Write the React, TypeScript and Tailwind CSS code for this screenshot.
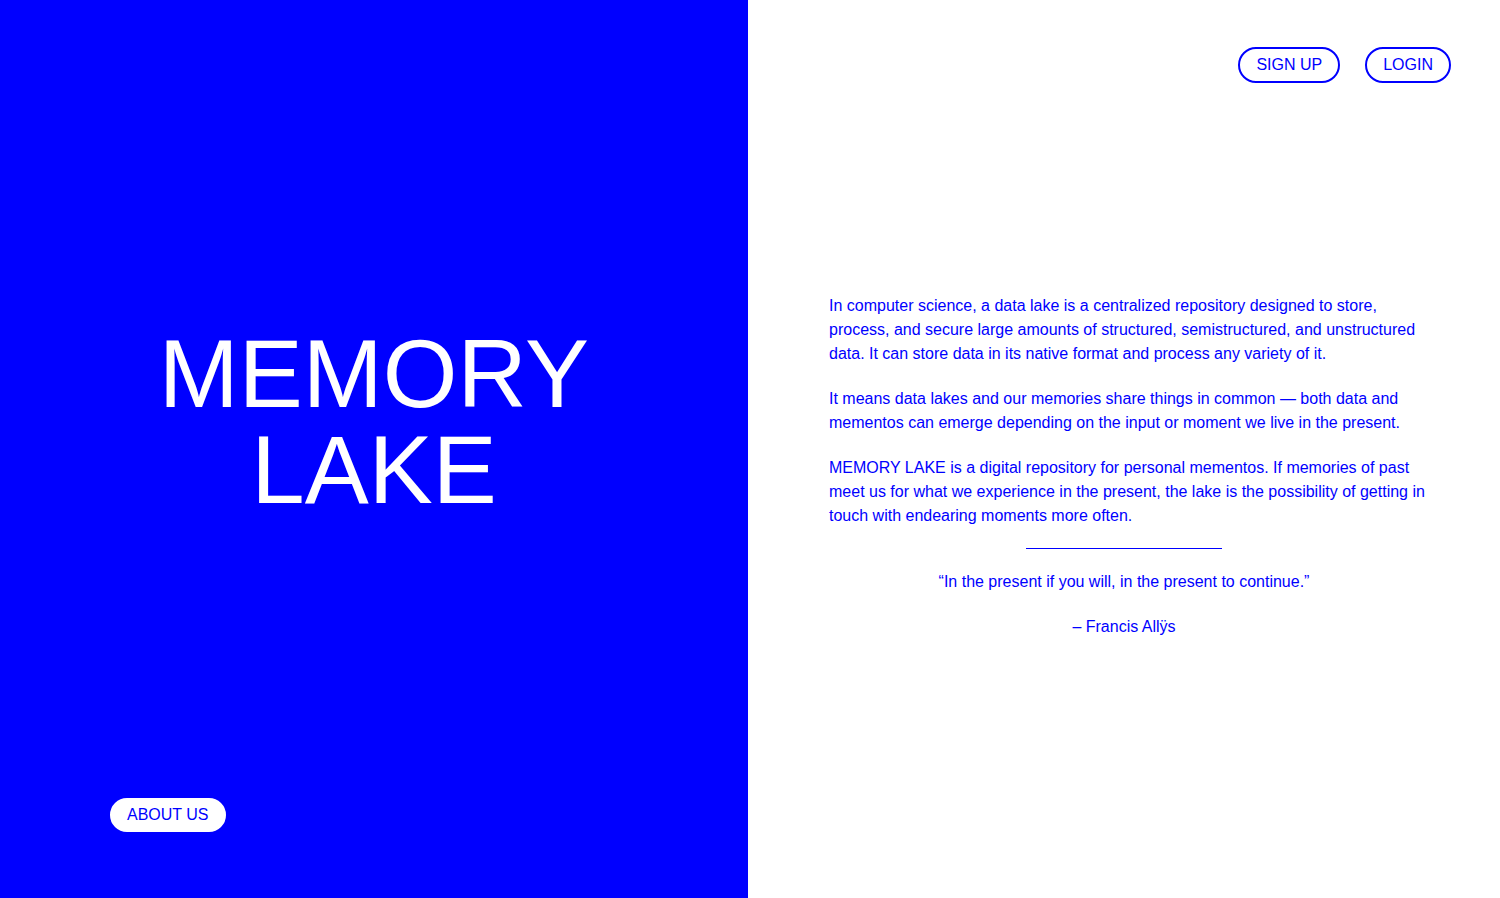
import React from "react";

export default function App() {
  const font = { fontFamily: '"Liberation Sans", Arial, sans-serif' };
  return (
    <div className="flex h-[898px] w-[1500px] overflow-hidden bg-white" style={font}>
      <div className="relative flex w-[748px] shrink-0 flex-col bg-[#0000ff]">
        <div className="flex flex-1 items-center justify-center pt-[46px]">
          <h1 className="text-center text-[96px] font-normal leading-[96px] text-white">
            <span className="block">MEMORY</span>
            <span className="block">LAKE</span>
          </h1>
        </div>
        <div className="pb-[66px] pl-[110px]">
          <button className="h-[34px] rounded-full border-2 border-white bg-white px-[15px] text-[16px] leading-none text-[#0000ff]">
            ABOUT US
          </button>
        </div>
      </div>
      <div className="flex flex-1 flex-col">
        <div className="flex justify-end gap-[25px] pr-[49px] pt-[47px]">
          <button className="h-[36px] rounded-full border-2 border-[#0000ff] px-[16px] text-[16px] leading-none text-[#0000ff]">
            SIGN UP
          </button>
          <button className="h-[36px] rounded-full border-2 border-[#0000ff] px-[16px] text-[16px] leading-none text-[#0000ff]">
            LOGIN
          </button>
        </div>
        <div className="ml-[81px] mt-[211px] w-[596px] text-[16px] leading-[24px] text-[#0000ff]">
          <p>
            In computer science, a data lake is a centralized repository designed to store, process, and secure large amounts of structured, semistructured, and unstructured data. It can store data in its native format and process any variety of it.
          </p>
          <p className="mt-[21px]">
            It means data lakes and our memories share things in common — both data and mementos can emerge depending on the input or moment we live in the present.
          </p>
          <p className="mt-[21px]">
            MEMORY LAKE is a digital repository for personal mementos. If memories of past meet us for what we experience in the present, the lake is the possibility of getting in touch with endearing moments more often.
          </p>
          <div className="ml-[197px] mt-[20px] h-px w-[196px] bg-[#0000ff]" />
          <p className="mt-[21px] w-[590px] text-center">“In the present if you will, in the present to continue.”</p>
          <p className="mt-[21px] w-[590px] text-center">– Francis Allÿs</p>
        </div>
      </div>
    </div>
  );
}
